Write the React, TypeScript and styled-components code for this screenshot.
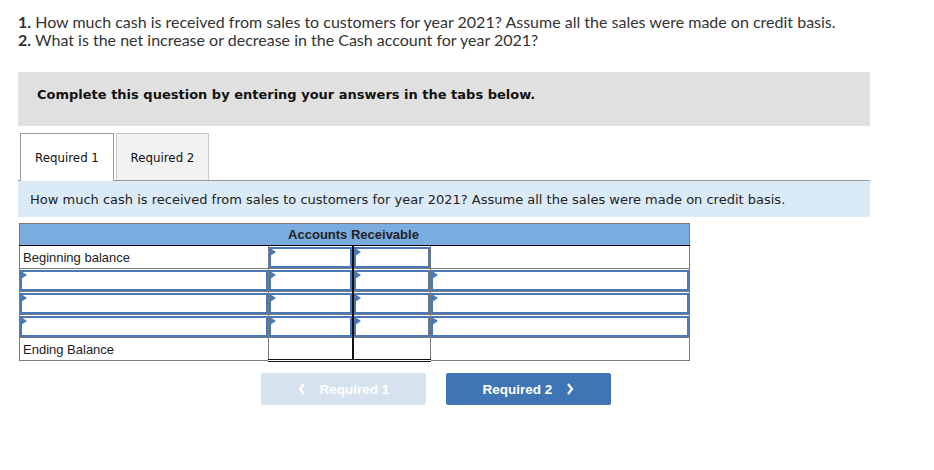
import React from "react";
import styled, { createGlobalStyle } from "styled-components";

const Global = createGlobalStyle`
  html, body { margin: 0; padding: 0; background: #fff; }
  body { font-family: "Lato", "Liberation Sans", sans-serif; color: #333; }
`;

const Page = styled.div`
  width: 934px;
  height: 470px;
  box-sizing: border-box;
  padding: 13px 64px 0 18px;
`;

const Questions = styled.div`
  font-family: "Lato", "Liberation Sans", sans-serif;
  font-size: 16px;
  line-height: 18px;
  color: #333;
  margin-bottom: 23px;
`;

const QLine = styled.div`
  white-space: nowrap;
`;

const Num = styled.b`
  font-weight: 700;
`;

const Banner = styled.div`
  background: #e0e0e0;
  height: 54px;
  box-sizing: border-box;
  padding: 15px 0 0 19px;
  font-family: "DejaVu Sans", Verdana, sans-serif;
  font-weight: 700;
  font-size: 13px;
  line-height: 16px;
  color: #111;
  margin-bottom: 7px;
`;

const Tabs = styled.div`
  display: flex;
  gap: 2px;
  padding-left: 2px;
  border-bottom: 1px solid #999;
  height: 47px;
`;

const Tab = styled.div<{ $active?: boolean }>`
  width: ${(p) => (p.$active ? 94 : 93)}px;
  box-sizing: border-box;
  height: ${(p) => (p.$active ? 48 : 47)}px;
  margin-bottom: ${(p) => (p.$active ? -1 : 0)}px;
  background: ${(p) => (p.$active ? "#fff" : "#f2f2f2")};
  border: 1px solid ${(p) => (p.$active ? "#999" : "#c8c8c8")};
  border-bottom: 0;
  display: flex;
  align-items: center;
  justify-content: center;
  padding-top: 1px;
  font-family: "DejaVu Sans", Verdana, sans-serif;
  font-size: 11.8px;
  color: #111;
`;

const Instruction = styled.div`
  background: #dbeaf7;
  height: 36px;
  display: flex;
  align-items: center;
  padding-left: 12px;
  font-family: "DejaVu Sans", Verdana, sans-serif;
  font-size: 13px;
  color: #222;
  margin-bottom: 6px;
  white-space: nowrap;
`;

const Table = styled.table`
  margin-left: 1px;
  border-collapse: collapse;
  border: 1px solid #7a7a7a;
  font-family: "Liberation Sans", Arial, sans-serif;
  font-size: 13px;
  color: #222;
  table-layout: fixed;
  width: 670px;
`;

const Col = styled.col<{ $w: number }>`
  width: ${(p) => p.$w}px;
`;

const HeadCell = styled.th<{ $shift?: number }>`
  background: #7aace0;
  height: 21px;
  padding: 0 0 0 ${(p) => p.$shift ?? 0}px;
  font-weight: 700;
  font-size: 13px;
  color: #222;
  border-bottom: 1px solid #000;
  text-align: center;
`;

const Cell = styled.td<{ $sep?: boolean; $total?: boolean }>`
  height: 23px;
  padding: 0;
  box-sizing: border-box;
  border: 1px solid #7a7a7a;
  ${(p) => (p.$sep ? "border-right: 2px solid #111;" : "")}
  ${(p) => (p.$total ? "border-bottom: 3px double #111;" : "")}
  vertical-align: middle;
`;

const Label = styled.div`
  padding-left: 3px;
  line-height: 21px;
`;

const InputBox = styled.div`
  position: relative;
  height: 21px;
  box-sizing: border-box;
  border: 2px solid #4a78b4;
  background: #fff;
  &::before {
    content: "";
    position: absolute;
    left: -1px;
    top: -1px;
    border-top: 4px solid transparent;
    border-bottom: 4px solid transparent;
    border-left: 6px solid #4a78b4;
  }
`;

const Nav = styled.div`
  display: flex;
  gap: 20px;
  padding-left: 243px;
  margin-top: 11px;
`;

const NavButton = styled.div<{ $disabled?: boolean }>`
  width: 165px;
  height: 32px;
  border-radius: 2px;
  background: ${(p) => (p.$disabled ? "#d6e3ef" : "#3f75b5")};
  color: #fff;
  display: flex;
  align-items: center;
  justify-content: center;
  gap: 14px;
  font-family: "Liberation Sans", Arial, sans-serif;
  font-weight: 700;
  font-size: 13.5px;
`;

const Chevron = ({ dir }: { dir: "left" | "right" }) => (
  <svg width="8" height="12" viewBox="0 0 8 12">
    <path
      d={dir === "left" ? "M6 1 L2 6 L6 11" : "M2 1 L6 6 L2 11"}
      fill="none"
      stroke="#fff"
      strokeWidth="2.2"
    />
  </svg>
);

const rows = [
  { label: "Beginning balance", inputs: [false, true, true, false] },
  { label: "", inputs: [true, true, true, true] },
  { label: "", inputs: [true, true, true, true] },
  { label: "", inputs: [true, true, true, true] },
];

export default function App() {
  return (
    <Page>
      <Global />
      <Questions>
        <QLine>
          <Num>1.</Num> How much cash is received from sales to customers for year 2021? Assume all the sales were made on credit basis.
        </QLine>
        <QLine>
          <Num>2.</Num> What is the net increase or decrease in the Cash account for year 2021?
        </QLine>
      </Questions>
      <Banner>Complete this question by entering your answers in the tabs below.</Banner>
      <Tabs>
        <Tab $active>Required 1</Tab>
        <Tab>Required 2</Tab>
      </Tabs>
      <Instruction>
        How much cash is received from sales to customers for year 2021? Assume all the sales were made on credit basis.
      </Instruction>
      <Table>
        <colgroup>
          <Col $w={249} />
          <Col $w={84} />
          <Col $w={78} />
          <Col $w={259} />
        </colgroup>
        <thead>
          <tr>
            <HeadCell />
            <HeadCell colSpan={2} $shift={8}>Accounts Receivable</HeadCell>
            <HeadCell />
          </tr>
        </thead>
        <tbody>
          {rows.map((r, i) => (
            <tr key={i}>
              {r.inputs.map((inp, j) => (
                <Cell key={j} $sep={j === 1}>
                  {inp ? <InputBox /> : j === 0 ? <Label>{r.label}</Label> : null}
                </Cell>
              ))}
            </tr>
          ))}
          <tr>
            <Cell>
              <Label>Ending Balance</Label>
            </Cell>
            <Cell $sep $total />
            <Cell $total />
            <Cell />
          </tr>
        </tbody>
      </Table>
      <Nav>
        <NavButton $disabled>
          <Chevron dir="left" />
          Required 1
        </NavButton>
        <NavButton>
          Required 2
          <Chevron dir="right" />
        </NavButton>
      </Nav>
    </Page>
  );
}
